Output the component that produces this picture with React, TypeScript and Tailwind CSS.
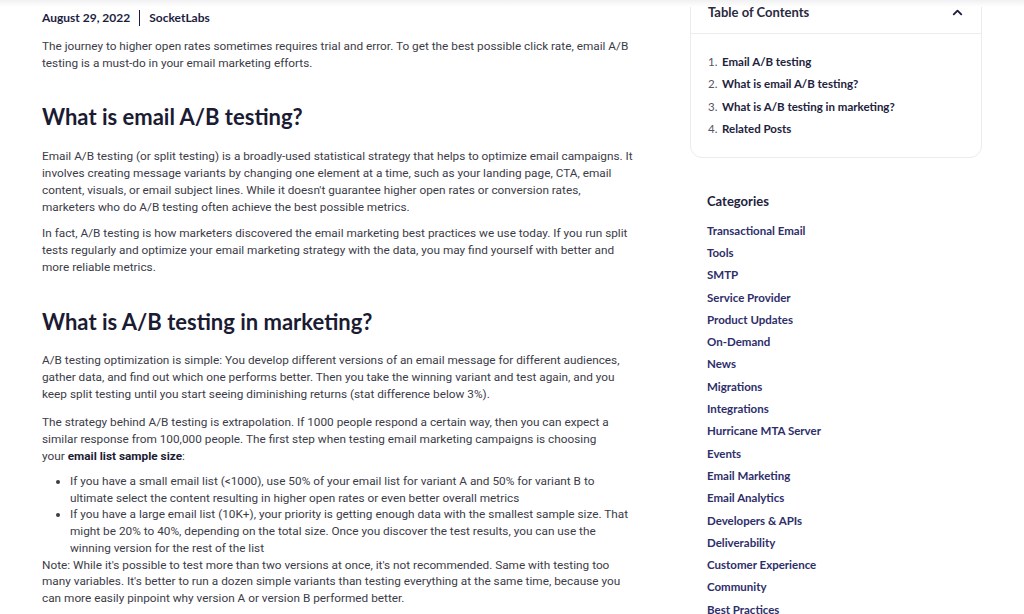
import { ChevronUp } from "lucide-react";

const heading = { fontFamily: "Lato, 'Noto Sans', sans-serif" };
const body = { fontFamily: "Roboto, 'Liberation Sans', sans-serif" };

const toc = [
  "Email A/B testing",
  "What is email A/B testing?",
  "What is A/B testing in marketing?",
  "Related Posts",
];

const categories = [
  "Transactional Email",
  "Tools",
  "SMTP",
  "Service Provider",
  "Product Updates",
  "On-Demand",
  "News",
  "Migrations",
  "Integrations",
  "Hurricane MTA Server",
  "Events",
  "Email Marketing",
  "Email Analytics",
  "Developers & APIs",
  "Deliverability",
  "Customer Experience",
  "Community",
  "Best Practices",
];

export default function App() {
  return (
    <main className="relative w-[1024px] h-[614px] overflow-hidden bg-white">
      <div className="absolute top-0 left-0 w-full h-[7px] bg-gradient-to-b from-[#f1f1f3] to-white" />

      <div className="flex">
        {/* article */}
        <article className="w-[610px] ml-[42px] pt-[10px] text-[#3c3c48] text-[11.8px] whitespace-nowrap" style={body}>
          <div className="flex items-center text-[12px] font-bold text-[#1d1d3f] h-[16px]" style={heading}>
            <span>August 29, 2022</span>
            <span className="mx-[9px] w-px h-[16px] bg-[#1d1d3f]" />
            <span>SocketLabs</span>
          </div>

          <p className="mt-[12px] leading-[17px]">
            The journey to higher open rates sometimes requires trial and error. To get the best possible click rate, email A/B
            <br />
            testing is a must-do in your email marketing efforts.
          </p>

          <h2 className="mt-[30px] text-[22px] leading-[30px] font-bold text-[#1b1b33]" style={heading}>
            What is email A/B testing?
          </h2>

          <p className="mt-[16px] leading-[17px]">
            Email A/B testing (or split testing) is a broadly-used statistical strategy that helps to optimize email campaigns. It
            <br />
            involves creating message variants by changing one element at a time, such as your landing page, CTA, email
            <br />
            content, visuals, or email subject lines. While it doesn't guarantee higher open rates or conversion rates,
            <br />
            marketers who do A/B testing often achieve the best possible metrics.
          </p>

          <p className="mt-[9px] leading-[17px]">
            In fact, A/B testing is how marketers discovered the email marketing best practices we use today. If you run split
            <br />
            tests regularly and optimize your email marketing strategy with the data, you may find yourself with better and
            <br />
            more reliable metrics.
          </p>

          <h2 className="mt-[31px] text-[22px] leading-[30px] font-bold text-[#1b1b33]" style={heading}>
            What is A/B testing in marketing?
          </h2>

          <p className="mt-[15px] leading-[17px]">
            A/B testing optimization is simple: You develop different versions of an email message for different audiences,
            <br />
            gather data, and find out which one performs better. Then you take the winning variant and test again, and you
            <br />
            keep split testing until you start seeing diminishing returns (stat difference below 3%).
          </p>

          <p className="mt-[11px] leading-[17px]">
            The strategy behind A/B testing is extrapolation. If 1000 people respond a certain way, then you can expect a
            <br />
            similar response from 100,000 people. The first step when testing email marketing campaigns is choosing
            <br />
            your <strong className="font-bold text-[#1b1b33]">email list sample size</strong>:
          </p>

          <ul className="mt-[8px] ml-[28px] list-disc leading-[16.7px]">
            <li>
              If you have a small email list (&lt;1000), use 50% of your email list for variant A and 50% for variant B to
              <br />
              ultimate select the content resulting in higher open rates or even better overall metrics
            </li>
            <li>
              If you have a large email list (10K+), your priority is getting enough data with the smallest sample size. That
              <br />
              might be 20% to 40%, depending on the total size. Once you discover the test results, you can use the
              <br />
              winning version for the rest of the list
            </li>
          </ul>

          <p className="leading-[16.7px]">
            Note: While it's possible to test more than two versions at once, it's not recommended. Same with testing too
            <br />
            many variables. It's better to run a dozen simple variants than testing everything at the same time, because you
            <br />
            can more easily pinpoint why version A or version B performed better.
          </p>
        </article>

        {/* sidebar */}
        <aside className="ml-[38px] w-[292px]" style={heading}>
          <div className="-mt-[20px] border border-[#ececf0] rounded-xl">
            <div className="flex items-center justify-between pl-[17px] pr-[16px] pt-[22px] pb-[10px] border-b border-[#ececf0]">
              <span className="text-[13px] font-bold text-[#2a2a40]">Table of Contents</span>
              <ChevronUp size={15} strokeWidth={3} className="text-[#1d1d3f]" />
            </div>
            <ol className="pt-[17px] pb-[17px] pl-[17px] text-[11.5px]">
              {toc.map((t, i) => (
                <li key={t} className="flex h-[22.3px] items-center">
                  <span className="text-[#555566] w-[14px]">{i + 1}.</span>
                  <span className="font-bold text-[#22223d]">{t}</span>
                </li>
              ))}
            </ol>
          </div>

          <h3 className="mt-[34px] ml-[17px] text-[13px] font-bold text-[#22223d]">Categories</h3>
          <ul className="mt-[8px] ml-[17px] text-[11.5px] font-bold text-[#2e2e6a]">
            {categories.map((c) => (
              <li key={c} className="h-[22.3px] flex items-center">
                {c}
              </li>
            ))}
          </ul>
        </aside>
      </div>
    </main>
  );
}
